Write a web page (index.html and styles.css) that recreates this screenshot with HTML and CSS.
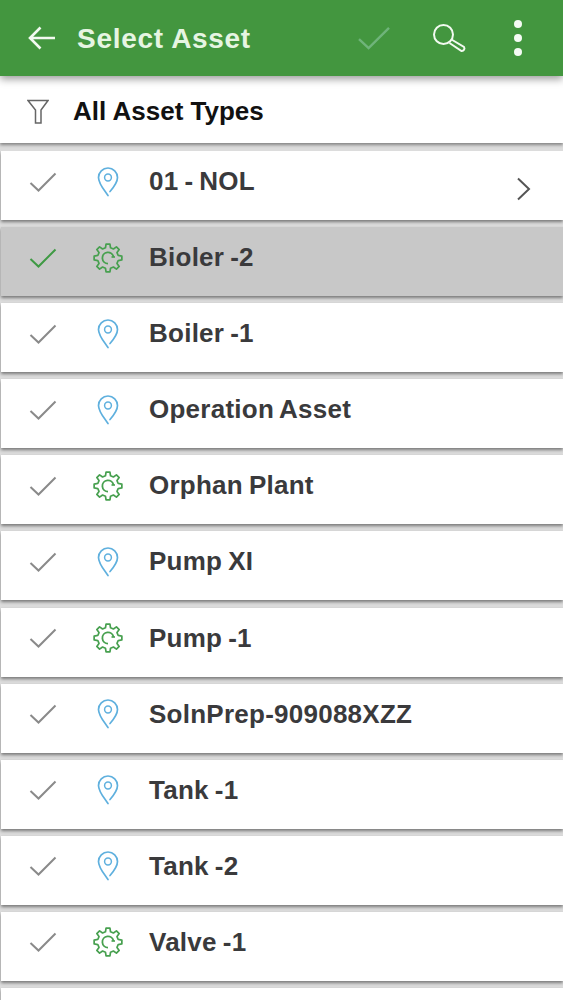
FILE: index.html
```html
<!DOCTYPE html>
<html lang="en">

<head>
    <meta charset="UTF-8">
    <meta name="viewport" content="width=device-width, initial-scale=1.0">
    <title>Select Asset</title>
    <link rel="stylesheet" href="styles.css">
</head>

<body>
    <svg class="defs" width="0" height="0">
        <symbol id="i-check" viewBox="0 0 28 20">
            <path d="M1.5 11 L9.5 18.5 L26.5 1.5" fill="none" stroke="currentColor" stroke-width="2" />
        </symbol>
        <symbol id="i-pin" viewBox="0 0 22 30">
            <path d="M11 28.5 C8 24 1.5 17 1.5 10.5 A9.5 9.5 0 0 1 20.5 10.5 C20.5 15.5 16.5 20.5 13 24.5" fill="none" stroke="currentColor" stroke-width="1.7" stroke-linecap="round" />
            <circle cx="11" cy="10.5" r="3.4" fill="none" stroke="currentColor" stroke-width="1.5" />
        </symbol>
        <symbol id="i-gear" viewBox="0 0 30 30">
            <polygon points="12.46,4.81 13.05,1.14 16.95,1.14 17.54,4.81 20.41,6 23.43,3.82 26.18,6.57 24,9.59 25.19,12.46 28.86,13.05 28.86,16.95 25.19,17.54 24,20.41 26.18,23.43 23.43,26.18 20.41,24 17.54,25.19 16.95,28.86 13.05,28.86 12.46,25.19 9.59,24 6.57,26.18 3.82,23.43 6,20.41 4.81,17.54 1.14,16.95 1.14,13.05 4.81,12.46 6,9.59 3.82,6.57 6.57,3.82 9.59,6" fill="none" stroke="currentColor" stroke-width="1.7" stroke-linejoin="round" />
            <path d="M20.5 14 A5.6 5.6 0 1 0 15 20.6" fill="none" stroke="currentColor" stroke-width="1.8" />
            <path d="M18.5 14 H22" fill="none" stroke="currentColor" stroke-width="1.6" />
        </symbol>
    </svg>

    <!-- Top bar -->
    <header class="topbar">
        <svg class="back-icon" width="30" height="26" viewBox="0 0 30 26">
            <path d="M28 13 H3 M13.5 2.5 L3 13 L13.5 23.5" fill="none" stroke="currentColor" stroke-width="2.6" />
        </svg>
        <h1 class="title">Select Asset</h1>
        <svg class="done-icon"><use href="#i-check" /></svg>
        <svg class="search-icon" width="36" height="30" viewBox="0 0 36 30">
            <circle cx="11.5" cy="11.5" r="9.5" fill="none" stroke="currentColor" stroke-width="2" />
            <path d="M19.5 16.5 L32 24 A2.6 2.6 0 0 1 29.5 28 L17.5 20" fill="none" stroke="currentColor" stroke-width="2" />
        </svg>
        <div class="more-icon"><span></span><span></span><span></span></div>
    </header>

    <!-- Filter -->
    <div class="filter">
        <svg class="filter-icon" width="22" height="25" viewBox="0 0 22 25">
            <path d="M1 1.5 H21 L14 11 V24 H8.5 V11 Z" fill="none" stroke="currentColor" stroke-width="1.5" />
        </svg>
        <span class="filter-label">All Asset Types</span>
    </div>

    <!-- Assets -->
    <ul class="asset-list">
        <li class="asset">
            <svg class="check"><use href="#i-check" /></svg>
            <svg class="type pin"><use href="#i-pin" /></svg>
            <span class="name">01 - NOL</span>
            <svg class="chevron" width="15" height="24" viewBox="0 0 15 24">
                <path d="M2 1.5 L13 12 L2 22.5" fill="none" stroke="currentColor" stroke-width="2" />
            </svg>
        </li>
        <li class="asset selected">
            <svg class="check"><use href="#i-check" /></svg>
            <svg class="type gear"><use href="#i-gear" /></svg>
            <span class="name">Bioler -2</span>
        </li>
        <li class="asset">
            <svg class="check"><use href="#i-check" /></svg>
            <svg class="type pin"><use href="#i-pin" /></svg>
            <span class="name">Boiler -1</span>
        </li>
        <li class="asset">
            <svg class="check"><use href="#i-check" /></svg>
            <svg class="type pin"><use href="#i-pin" /></svg>
            <span class="name">Operation Asset</span>
        </li>
        <li class="asset">
            <svg class="check"><use href="#i-check" /></svg>
            <svg class="type gear"><use href="#i-gear" /></svg>
            <span class="name">Orphan Plant</span>
        </li>
        <li class="asset">
            <svg class="check"><use href="#i-check" /></svg>
            <svg class="type pin"><use href="#i-pin" /></svg>
            <span class="name">Pump XI</span>
        </li>
        <li class="asset">
            <svg class="check"><use href="#i-check" /></svg>
            <svg class="type gear"><use href="#i-gear" /></svg>
            <span class="name">Pump -1</span>
        </li>
        <li class="asset">
            <svg class="check"><use href="#i-check" /></svg>
            <svg class="type pin"><use href="#i-pin" /></svg>
            <span class="name">SolnPrep-909088XZZ</span>
        </li>
        <li class="asset">
            <svg class="check"><use href="#i-check" /></svg>
            <svg class="type pin"><use href="#i-pin" /></svg>
            <span class="name">Tank -1</span>
        </li>
        <li class="asset">
            <svg class="check"><use href="#i-check" /></svg>
            <svg class="type pin"><use href="#i-pin" /></svg>
            <span class="name">Tank -2</span>
        </li>
        <li class="asset">
            <svg class="check"><use href="#i-check" /></svg>
            <svg class="type gear"><use href="#i-gear" /></svg>
            <span class="name">Valve -1</span>
        </li>
        <li class="asset"></li>
    </ul>
</body>

</html>
```

FILE: styles.css
```css
* {
    margin: 0;
    padding: 0;
    box-sizing: border-box;
    font-family: "Liberation Sans", Arial, sans-serif;
}

html,
body {
    height: 1000px;
    overflow: hidden;
}

body {
    background-color: #dcdcdc;
}

.defs {
    position: absolute;
}

/* Top bar */
.topbar {
    position: relative;
    z-index: 2;
    display: flex;
    align-items: center;
    height: 76px;
    padding: 0 0 0 27px;
    background-color: #43963f;
    color: #f2faf0;
    box-shadow: 0 3px 8px rgba(0, 0, 0, 0.4);
}

.title {
    margin-left: 20px;
    padding-top: 2px;
    font-size: 28px;
    font-weight: bold;
    letter-spacing: 0.7px;
    color: #e6f5e2;
}

.done-icon {
    width: 34px;
    height: 24px;
    margin-left: auto;
    color: #6fb47a;
}

.search-icon {
    margin-left: 41px;
}

.more-icon {
    display: flex;
    flex-direction: column;
    gap: 6px;
    margin: 0 41px 0 46px;
}

.more-icon span {
    width: 8px;
    height: 8px;
    border-radius: 50%;
    background-color: #f5fbf4;
}

/* Filter */
.filter {
    position: relative;
    z-index: 1;
    display: flex;
    align-items: center;
    height: 67px;
    padding: 4px 0 0 27px;
    background-color: #fff;
    box-shadow: 0 2px 3px rgba(0, 0, 0, 0.4);
}

.filter-icon {
    color: #666;
}

.filter-label {
    margin-left: 24px;
    font-size: 26px;
    font-weight: bold;
    color: #111;
}

/* Assets */
.asset-list {
    display: flex;
    flex-direction: column;
    gap: 7.1px;
    height: 849px;
    margin-top: 8px;
    padding-left: 1px;
    overflow: hidden;
    list-style: none;
}

.asset {
    display: flex;
    align-items: center;
    flex-shrink: 0;
    height: 69px;
    padding-bottom: 8px;
    background-color: #fff;
    color: #666;
    box-shadow: 0 2px 3px rgba(0, 0, 0, 0.45);
}

.asset.selected {
    background-color: #c8c8c8;
}

.check {
    width: 28px;
    height: 20px;
    margin-left: 28px;
    color: #8a8a8a;
}

.selected .check {
    color: #3f9a44;
}

.type {
    width: 30px;
    height: 30px;
    margin-left: 36px;
}

.pin {
    color: #5fb0de;
}

.gear {
    color: #47a04f;
}

.name {
    margin-left: 26px;
    font-size: 26px;
    font-weight: bold;
    letter-spacing: 0.25px;
    word-spacing: -1.5px;
    color: #3a3a3c;
}

.chevron {
    margin: 14px 32px 0 auto;
    color: #555;
}
```
